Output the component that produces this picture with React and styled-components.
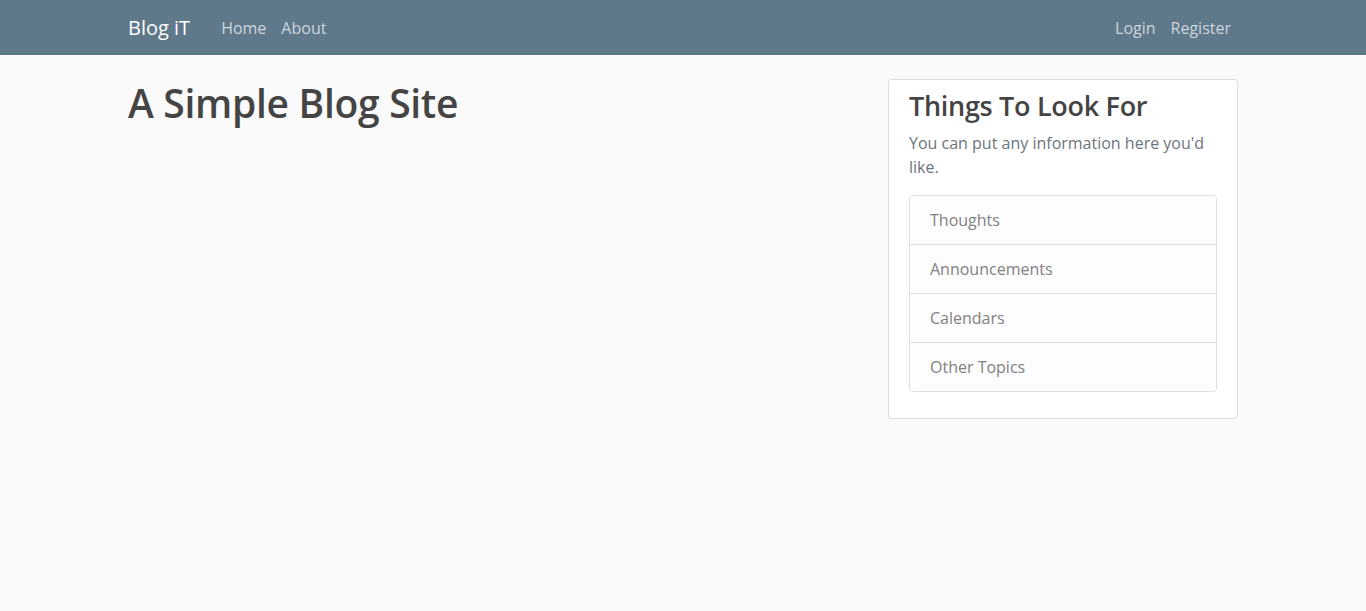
import styled, { createGlobalStyle } from "styled-components";

const GlobalStyle = createGlobalStyle`
  * {
    box-sizing: border-box;
  }

  body {
    margin: 0;
    background: #fafafa;
    color: #333333;
    font-family: "Open Sans", "Noto Sans", sans-serif;
    font-size: 16px;
    line-height: 1.5;
  }
`;

const Header = styled.header`
  background-color: #5f788a;
  height: 55px;
`;

const Container = styled.div`
  width: 1140px;
  margin: 0 auto;
  padding: 0 15px;
`;

const NavBar = styled(Container)`
  display: flex;
  align-items: center;
  height: 100%;
`;

const Brand = styled.a`
  color: #ffffff;
  font-size: 20px;
  margin-right: 23px;
  text-decoration: none;
`;

const NavGroup = styled.nav`
  display: flex;
  margin-left: ${(p) => (p.$right ? "auto" : "0")};
`;

const NavLink = styled.a`
  color: #cbd5dc;
  padding: 0 7px 0 8px;
  text-decoration: none;
`;

const Main = styled(Container)`
  display: flex;
  padding-top: 24px;
`;

const Content = styled.section`
  width: 760px;
  padding-right: 15px;
`;

const Sidebar = styled.aside`
  width: 350px;
  margin-left: auto;
`;

const Title = styled.h1`
  margin: 0;
  color: #444444;
  font-size: 39px;
  font-weight: 600;
  line-height: 1.25;
  letter-spacing: -0.3px;
`;

const Card = styled.div`
  background: #ffffff;
  border: 1px solid #dddddd;
  border-radius: 3px;
  padding: 10px 20px 26px;
`;

const CardTitle = styled.h3`
  margin: 0 0 9px;
  color: #444444;
  font-size: 27px;
  font-weight: 600;
  line-height: 1.2;
  letter-spacing: -0.3px;
`;

const Muted = styled.p`
  margin: 0 0 16px;
  color: #6c757d;
`;

const List = styled.ul`
  list-style: none;
  margin: 0;
  padding: 0;
  border: 1px solid rgba(0, 0, 0, 0.125);
  border-radius: 4px;
  overflow: hidden;
`;

const Item = styled.li`
  background: #fdfdfe;
  color: #818182;
  padding: 12px 20px;

  & + & {
    border-top: 1px solid rgba(0, 0, 0, 0.125);
  }
`;

const topics = ["Thoughts", "Announcements", "Calendars", "Other Topics"];

const App = () => {
  return (
    <>
      <GlobalStyle />
      <Header>
        <NavBar>
          <Brand href="#">Blog iT</Brand>
          <NavGroup>
            <NavLink href="#">Home</NavLink>
            <NavLink href="#">About</NavLink>
          </NavGroup>
          <NavGroup $right>
            <NavLink href="#">Login</NavLink>
            <NavLink href="#">Register</NavLink>
          </NavGroup>
        </NavBar>
      </Header>
      <Main>
        <Content>
          <Title>A Simple Blog Site</Title>
        </Content>
        <Sidebar>
          <Card>
            <CardTitle>Things To Look For</CardTitle>
            <Muted>You can put any information here you'd like.</Muted>
            <List>
              {topics.map((t) => (
                <Item key={t}>{t}</Item>
              ))}
            </List>
          </Card>
        </Sidebar>
      </Main>
    </>
  );
};

export default App;
